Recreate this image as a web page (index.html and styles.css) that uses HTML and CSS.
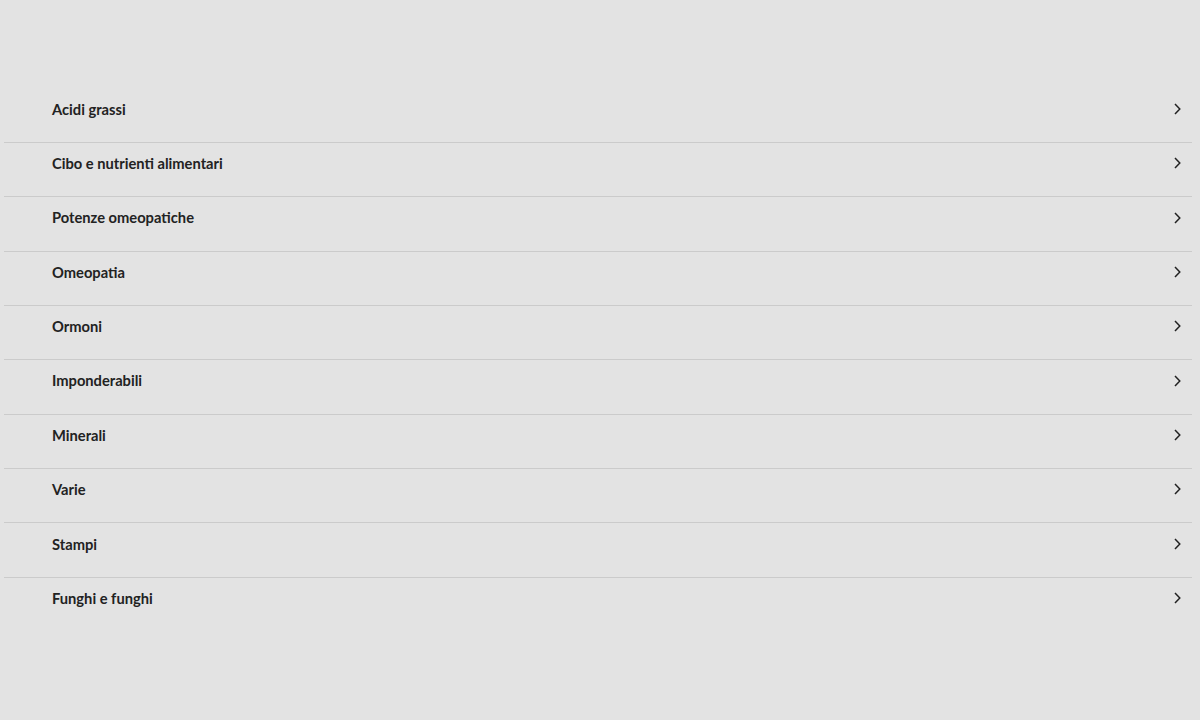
FILE: index.html
```html
<!DOCTYPE html>
<html lang="it">
<head>
<meta charset="utf-8">
<title>Categorie</title>
<link rel="stylesheet" href="styles.css">
</head>
<body>
<ul class="list">
  <li class="item"><span class="label">Acidi grassi</span><svg class="chev" viewBox="0 0 8 12"><path d="M2 1 L6.8 6 L2 11"/></svg></li>
  <li class="item"><span class="label">Cibo e nutrienti alimentari</span><svg class="chev" viewBox="0 0 8 12"><path d="M2 1 L6.8 6 L2 11"/></svg></li>
  <li class="item"><span class="label">Potenze omeopatiche</span><svg class="chev" viewBox="0 0 8 12"><path d="M2 1 L6.8 6 L2 11"/></svg></li>
  <li class="item"><span class="label">Omeopatia</span><svg class="chev" viewBox="0 0 8 12"><path d="M2 1 L6.8 6 L2 11"/></svg></li>
  <li class="item"><span class="label">Ormoni</span><svg class="chev" viewBox="0 0 8 12"><path d="M2 1 L6.8 6 L2 11"/></svg></li>
  <li class="item"><span class="label">Imponderabili</span><svg class="chev" viewBox="0 0 8 12"><path d="M2 1 L6.8 6 L2 11"/></svg></li>
  <li class="item"><span class="label">Minerali</span><svg class="chev" viewBox="0 0 8 12"><path d="M2 1 L6.8 6 L2 11"/></svg></li>
  <li class="item"><span class="label">Varie</span><svg class="chev" viewBox="0 0 8 12"><path d="M2 1 L6.8 6 L2 11"/></svg></li>
  <li class="item"><span class="label">Stampi</span><svg class="chev" viewBox="0 0 8 12"><path d="M2 1 L6.8 6 L2 11"/></svg></li>
  <li class="item"><span class="label">Funghi e funghi</span><svg class="chev" viewBox="0 0 8 12"><path d="M2 1 L6.8 6 L2 11"/></svg></li>
</ul>
</body>
</html>
```
FILE: styles.css
```css
html, body {
  margin: 0;
  padding: 0;
  background: #e3e3e3;
  height: 100%;
}
body {
  font-family: Lato, "Open Sans", sans-serif;
  color: #222222;
}
.list {
  list-style: none;
  margin: 0 8px 0 4px;
  padding: 88.4px 0 0 0;
}
.item {
  display: flex;
  align-items: flex-start;
  justify-content: space-between;
  height: 53.375px;
  box-sizing: content-box;
  padding: 0 11px 0 48px;
  border-bottom: 1px solid #cbcbcb;
}
.item:last-child {
  border-bottom: none;
}
.label {
  font-size: 14.7px;
  font-weight: 700;
  line-height: 20px;
  margin-top: 10.2px;
}
.chev {
  width: 8px;
  height: 12px;
  margin-top: 14.4px;
  fill: none;
  stroke: #222222;
  stroke-width: 1.5;
}
```
